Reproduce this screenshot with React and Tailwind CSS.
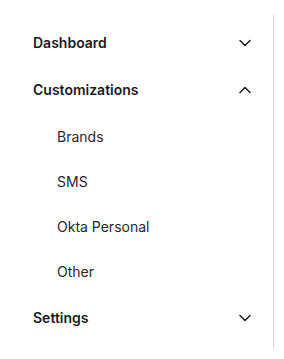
import { ChevronDown, ChevronUp } from "lucide-react";

function Header({ label, open }) {
  const Icon = open ? ChevronUp : ChevronDown;
  return (
    <button className="flex h-[47px] w-full items-center justify-between pl-[33px] pr-[18px] text-left">
      <span className="text-[14px] font-semibold text-[#1a1a1e]">{label}</span>
      <Icon size={20} strokeWidth={1.75} className="text-[#1a1a1e]" />
    </button>
  );
}

function SubItem({ label }) {
  return (
    <a className="flex h-[45px] items-center pl-[57px] pt-[2px] text-[14px] text-[#27272c]">{label}</a>
  );
}

export default function App() {
  return (
    <div className="bg-white pt-[15px]" style={{ fontFamily: "Inter, 'Noto Sans', sans-serif" }}>
      <nav className="flex h-[333px] w-[274px] flex-col border-r border-[#d6d6d6] pt-[4px]">
        <Header label="Dashboard" />
        <Header label="Customizations" open />
        <div className="flex flex-col pb-[1px]">
          <SubItem label="Brands" />
          <SubItem label="SMS" />
          <SubItem label="Okta Personal" />
          <SubItem label="Other" />
        </div>
        <Header label="Settings" />
      </nav>
    </div>
  );
}
